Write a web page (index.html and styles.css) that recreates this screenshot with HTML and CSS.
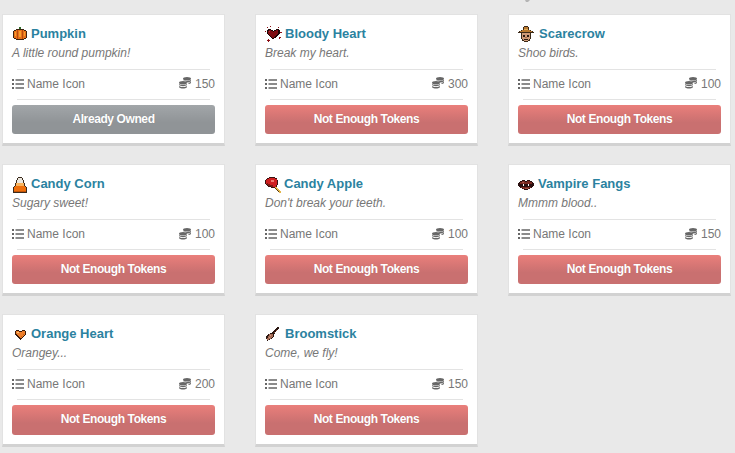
FILE: index.html
```html
<!DOCTYPE html>
<html lang="en">
<head>
<meta charset="utf-8">
<title>Shop</title>
<link rel="stylesheet" href="styles.css">
</head>
<body>
<svg class="speck" viewBox="0 0 8 3"><path d="M2 0h5L5 2H3z"/></svg>
<svg class="defs" width="0" height="0">
  <defs>
    <symbol id="list" viewBox="0 0 12 10"><path d="M0 0h2v2H0zM0 4h2v2H0zM0 8h2v2H0zM3.500 .2H12v1.600H3.500zM3.500 4.200H12v1.600H3.500zM3.500 8.200H12v1.600H3.500z"/></symbol>
    <symbol id="coins" viewBox="0 0 12 12">
      <ellipse cx="8" cy="1.800" rx="4" ry="1.800"/>
      <path d="M4.500 3.300c1.800 1.100 5.200 1.100 7.500-.3v1.300c-1 .8-2.500 1.200-4 1.100C7.200 4.500 6 3.900 4.500 3.700zM9.500 5.700c1-.1 1.900-.5 2.500-1v1.200c-.5.500-1.400.9-2.500 1z"/>
      <ellipse cx="4" cy="5.800" rx="4" ry="1.800"/>
      <path d="M0 6.900c1.600 1.400 6.400 1.400 8 0v1.200c-1.600 1.400-6.400 1.400-8 0zM0 9c1.600 1.400 6.400 1.400 8 0v1.200c-1.600 1.800-6.400 1.800-8 0z"/>
    </symbol>
  </defs>
</svg>
<main class="grid">

  <article class="card">
    <h3 class="title">
      <svg class="pix pix-16" viewBox="0 0 16 16"><path fill="#3d2410" d="M7 2h2v2h3v1h2v1h1v7h-1v1h-2v1H4v-1H2v-1H1V6h1V5h2V4h3z"/><path fill="#2f6b2a" d="M7 2h2v2H7z"/><path fill="#e8701a" d="M4 5h8v1h2v7h-2v1H4v-1H2V6h2z"/><path fill="#b84c0f" d="M5 5h1v9H5zM10 5h1v9h-1z"/><path fill="#f6a02e" d="M7 6h2v6H7zM3 7h1v4H3zM12 7h1v4h-1z"/></svg>
      <span class="name">Pumpkin</span>
    </h3>
    <p class="desc">A little round pumpkin!</p>
    <div class="meta">
      <span class="meta-item"><svg class="ic-list"><use href="#list"/></svg>Name Icon</span>
      <span class="meta-item"><svg class="ic-coins"><use href="#coins"/></svg>150</span>
    </div>
    <button class="btn btn-owned">Already Owned</button>
  </article>

  <article class="card">
    <h3 class="title">
      <svg class="pix pix-17" viewBox="0 0 17 16"><g transform="translate(0 1)"><path fill="#8c0f14" d="M2 1h1v1H2zM5 0h1v1H5zM13 1h1v1h-1zM0 5h1v1H0zM15 6h2v1h-2zM14 11h2v1h-1v1h-1zM3 13h1v1h1v1H4v1H3v-1H2v-1h1z"/><path fill="#1a0606" d="M3 3h3v1h2v1h1V4h2V3h3v1h1v4h-1v1h-1v1h-1v1h-1v1H9v1H7v-1H6v-1H5v-1H4V9H3V8H2V4h1z"/><path fill="#7e0d12" d="M4 4h2v1h2v1h1V5h2V4h2v4h-1v1h-1v1h-1v1H9v1H7v-1H6v-1H5V9H4V8H3V5h1z"/><path fill="#b6333a" d="M4 5h1v1H4z"/></g></svg>
      <span class="name">Bloody Heart</span>
    </h3>
    <p class="desc">Break my heart.</p>
    <div class="meta">
      <span class="meta-item"><svg class="ic-list"><use href="#list"/></svg>Name Icon</span>
      <span class="meta-item"><svg class="ic-coins"><use href="#coins"/></svg>300</span>
    </div>
    <button class="btn btn-denied">Not Enough Tokens</button>
  </article>

  <article class="card">
    <h3 class="title">
      <svg class="pix pix-18" viewBox="0 0 18 16"><g transform="translate(-1 1)"><path fill="#3c2a18" d="M7 0h4v1h1v3h2v1h2v1h1v1H1V6h1V5h2V4h2V1h1z"/><path fill="#b9782f" d="M7 1h4v3h2v1h2v1H3V5h2V4h2z"/><path fill="#e2ad57" d="M7 3h4v1H7z"/><path fill="#3c2a18" d="M4 7h10v6h-1v2h-2v1H7v-1H5v-2H4z"/><path fill="#cf9b78" d="M5 7h8v6h-1v1h-1v1H7v-1H6v-1H5z"/><path fill="#2b1a12" d="M6 9h2v2H6zM10 9h2v2h-2zM7 13h4v1H7z"/><path fill="#a66a4a" d="M8 11h2v1H8z"/></g></svg>
      <span class="name">Scarecrow</span>
    </h3>
    <p class="desc">Shoo birds.</p>
    <div class="meta">
      <span class="meta-item"><svg class="ic-list"><use href="#list"/></svg>Name Icon</span>
      <span class="meta-item"><svg class="ic-coins"><use href="#coins"/></svg>100</span>
    </div>
    <button class="btn btn-denied">Not Enough Tokens</button>
  </article>

  <article class="card">
    <h3 class="title">
      <svg class="pix pix-16" viewBox="0 0 16 16"><path fill="#3a2a1c" d="M6 2h4v1h1v2h1v3h1v3h1v1h1v6H1v-6h1v-1h1V8h1V5h1V3h1z"/><path fill="#ece8df" d="M6 3h4v2h1v3H5V5h1z"/><path fill="#f9b35c" d="M4 8h8v3H4z"/><path fill="#ee6f0b" d="M3 11h10v1h1v5H2v-5h1z"/><path fill="#c55406" d="M2 16h12v1H2z"/></svg>
      <span class="name">Candy Corn</span>
    </h3>
    <p class="desc">Sugary sweet!</p>
    <div class="meta">
      <span class="meta-item"><svg class="ic-list"><use href="#list"/></svg>Name Icon</span>
      <span class="meta-item"><svg class="ic-coins"><use href="#coins"/></svg>100</span>
    </div>
    <button class="btn btn-denied">Not Enough Tokens</button>
  </article>

  <article class="card">
    <h3 class="title title-tight">
      <svg class="pix pix-17" viewBox="0 0 17 16"><g transform="translate(0 2)"><path fill="#3a1210" d="M4 0h6v1h2v2h1v5h-1v2h-2v1H6v-1H3V9H2V8H1V7H0V3h1V2h1V1h2z"/><path fill="#cf1f1f" d="M4 1h6v1h2v6h-1v2H6V9H3V8H2V7H1V3h1V2h2z"/><path fill="#f07a6e" d="M6 3h3v2H6z"/><path fill="#7c1a12" d="M2 6h1v1h2v1h3v2H6V9H3V8H2z"/><path fill="#e3b64a" d="M10 10h2v1h1v1h1v1h1v1h1v2h-2v-1h-1v-1h-1v-1h-1v-1h-1z"/><path fill="#5a3a10" d="M10 11h1v1h1v1h1v1h1v1h-1v-1h-1v-1h-1v-1h-1z"/></g></svg>
      <span class="name">Candy Apple</span>
    </h3>
    <p class="desc">Don't break your teeth.</p>
    <div class="meta">
      <span class="meta-item"><svg class="ic-list"><use href="#list"/></svg>Name Icon</span>
      <span class="meta-item"><svg class="ic-coins"><use href="#coins"/></svg>100</span>
    </div>
    <button class="btn btn-denied">Not Enough Tokens</button>
  </article>

  <article class="card">
    <h3 class="title">
      <svg class="pix pix-17" viewBox="0 0 17 16"><path fill="#2a1010" d="M4 5h3v1h2V5h3v1h2v1h1v1h1v3h-1v1h-1v1h-2v1h-2v1H6v-1H4v-1H2v-1H1v-1H0V8h1V7h1V6h2z"/><path fill="#7a2a22" d="M4 6h3v1h2V6h3v1h2v2H2V7h2zM3 12h10v1h-2v1H5v-1H3z"/><path fill="#a8574c" d="M4 7h2v1H4zM7 13h3v1H7z"/><path fill="#fff" d="M5 9h1v2H5zM10 9h1v2h-1z"/></svg>
      <span class="name">Vampire Fangs</span>
    </h3>
    <p class="desc">Mmmm blood..</p>
    <div class="meta">
      <span class="meta-item"><svg class="ic-list"><use href="#list"/></svg>Name Icon</span>
      <span class="meta-item"><svg class="ic-coins"><use href="#coins"/></svg>150</span>
    </div>
    <button class="btn btn-denied">Not Enough Tokens</button>
  </article>

  <article class="card">
    <h3 class="title">
      <svg class="pix pix-16" viewBox="0 0 16 16"><path fill="#3a1a0a" d="M4 5h3v1h3V5h3v1h1v4h-1v1h-1v1h-1v1h-1v1H9v1H8v-1H7v-1H6v-1H5v-1H4v-1H3V6h1z"/><path fill="#ee7f2b" d="M4 6h3v1h3V6h3v4h-1v1h-1v1h-1v1H8v-1H7v-1H6v-1H5v-1H4z"/><path fill="#fbc27a" d="M5 7h2v1H5z"/><path fill="#c95f14" d="M11 9h1v1h-1zM9 11h1v1H9z"/></svg>
      <span class="name">Orange Heart</span>
    </h3>
    <p class="desc">Orangey...</p>
    <div class="meta">
      <span class="meta-item"><svg class="ic-list"><use href="#list"/></svg>Name Icon</span>
      <span class="meta-item"><svg class="ic-coins"><use href="#coins"/></svg>200</span>
    </div>
    <button class="btn btn-denied">Not Enough Tokens</button>
  </article>

  <article class="card">
    <h3 class="title">
      <svg class="pix pix-17" viewBox="0 0 17 16"><g transform="translate(0 2)"><path fill="#2a1510" d="M12 0h2v2h-1v1h-1v1h-1v1h-1v2H9v3H8v1H7v1H5v1H3v1H2v-2H1V9h1V8h1V7h2V6h2V5h1V4h1V3h1V2h1V1h1z"/><path fill="#a56b55" d="M4 7h4v3H7v1H6v1H4v1H2v-2h1V9h1z"/><path fill="#d19b82" d="M5 8h1v1H5zM4 10h1v1H4z"/><path fill="#8a4a35" d="M9 5h1v1H9zM11 3h1v1h-1z"/></g></svg>
      <span class="name">Broomstick</span>
    </h3>
    <p class="desc">Come, we fly!</p>
    <div class="meta">
      <span class="meta-item"><svg class="ic-list"><use href="#list"/></svg>Name Icon</span>
      <span class="meta-item"><svg class="ic-coins"><use href="#coins"/></svg>150</span>
    </div>
    <button class="btn btn-denied">Not Enough Tokens</button>
  </article>

</main>
</body>
</html>
```
FILE: styles.css
```css
* { box-sizing: border-box; }

html, body { height: 100%; }

body {
  margin: 0;
  overflow: hidden;
  position: relative;
  background: #e9e9e9;
  font-family: "Liberation Sans", Arial, sans-serif;
  color: #777;
}

.speck {
  position: absolute;
  left: 523px;
  top: 0;
  width: 8px;
  height: 3px;
  fill: #b5b5b5;
}

.defs { position: absolute; }

.grid {
  display: grid;
  grid-template-columns: repeat(3, 223px);
  column-gap: 30px;
  row-gap: 17.75px;
  padding: 13.9px 0 0 2px;
}

.card {
  background: #fff;
  border: 1px solid #e2e2e2;
  border-bottom: 3px solid #d2d2d2;
  padding: 9px 9px 9px;
}

.title {
  display: flex;
  align-items: center;
  margin: 0;
  height: 18px;
  font-size: 13px;
  font-weight: 700;
  line-height: 18px;
  color: #2b82a0;
}

.name { padding-top: 2px; }

.pix {
  flex: none;
  height: 16px;
  overflow: visible;
  shape-rendering: crispEdges;
}

.pix-16 { width: 16px; margin-right: 3px; }
.pix-17 { width: 17px; margin-right: 3px; }
.pix-18 { width: 18px; margin-right: 3px; }

.title-tight .pix { margin-right: 2px; }

.desc {
  margin: 3px 0 0;
  height: 16px;
  font-size: 12px;
  font-style: italic;
  line-height: 16px;
  color: #777;
}

.meta {
  position: relative;
  display: flex;
  justify-content: space-between;
  align-items: center;
  margin-top: 8px;
  height: 31px;
  padding-bottom: 1px;
  font-size: 12px;
  color: #777;
}

.meta::before,
.meta::after {
  content: "";
  position: absolute;
  left: 5px;
  right: 5px;
  height: 1px;
  background: #e3e3e3;
}

.meta::before { top: 0; }
.meta::after { bottom: 0; }

.meta-item {
  display: flex;
  align-items: center;
}

.ic-list {
  width: 12px;
  height: 10px;
  margin-right: 3px;
  fill: #666;
}

.ic-coins {
  width: 12px;
  height: 12px;
  margin: 0 4px 1px 0;
  fill: #666;
}

.btn {
  display: block;
  width: 100%;
  height: 29.4px;
  margin-top: 5px;
  padding: 0 0 2px;
  border: 0;
  border-radius: 3px;
  font-family: inherit;
  font-size: 12px;
  font-weight: 700;
  letter-spacing: -.4px;
  color: #fff;
  text-shadow: 0 0 1px rgba(0, 0, 0, .15);
}

.btn-owned { background: linear-gradient(#a2a6a9, #909497 60%); }
.btn-denied { background: linear-gradient(#ea7f7b, #c97070 60%); }
```
